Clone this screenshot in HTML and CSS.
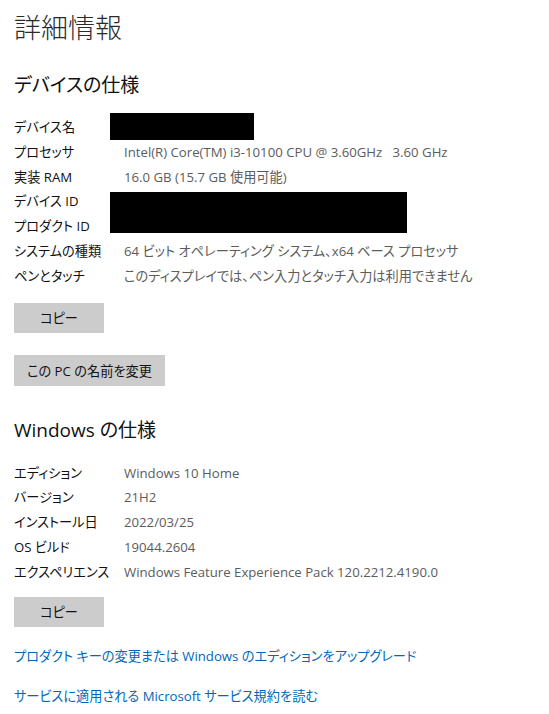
FILE: index.html
```html
<!DOCTYPE html>
<html lang="ja">
<head>
<meta charset="utf-8">
<link rel="stylesheet" href="styles.css">
</head>
<body>
<main class="page">
  <h1 class="title">詳細情報</h1>

  <h2 class="section">デバイスの仕様</h2>
  <div class="specs">
    <div class="label">デバイス名</div>
    <div class="value"><span class="redact redact-name"></span></div>
    <div class="label">プロセッサ</div>
    <div class="value">Intel(R) Core(TM) i3-10100 CPU @ 3.60GHz&nbsp;&nbsp;&nbsp;3.60 GHz</div>
    <div class="label">実装 RAM</div>
    <div class="value">16.0 GB (15.7 GB 使用可能)</div>
    <div class="label">デバイス ID</div>
    <div class="value value-span"><span class="redact redact-id"></span></div>
    <div class="label">プロダクト ID</div>
    <div class="label">システムの種類</div>
    <div class="value">64 ビット オペレーティング システム、x64 ベース プロセッサ</div>
    <div class="label">ペンとタッチ</div>
    <div class="value">このディスプレイでは、ペン入力とタッチ入力は利用できません</div>
  </div>
  <button class="btn btn-copy first-copy">コピー</button>
  <button class="btn btn-rename">この PC の名前を変更</button>

  <h2 class="section section-win">Windows の仕様</h2>
  <div class="specs specs-win">
    <div class="label">エディション</div>
    <div class="value">Windows 10 Home</div>
    <div class="label">バージョン</div>
    <div class="value">21H2</div>
    <div class="label">インストール日</div>
    <div class="value">2022/03/25</div>
    <div class="label">OS ビルド</div>
    <div class="value">19044.2604</div>
    <div class="label">エクスペリエンス</div>
    <div class="value">Windows Feature Experience Pack 120.2212.4190.0</div>
  </div>
  <button class="btn btn-copy second-copy">コピー</button>

  <a class="link link-first" href="#">プロダクト キーの変更または Windows のエディションをアップグレード</a>
  <a class="link link-second" href="#">サービスに適用される Microsoft サービス規約を読む</a>
</main>
</body>
</html>
```

FILE: styles.css
```css
html, body {
  margin: 0;
  padding: 0;
  background: #ffffff;
}

body {
  font-family: "Open Sans", "Noto Sans CJK JP", sans-serif;
  font-feature-settings: "palt";
  color: #000000;
  font-size: 13.2px;
}

.page {
  display: flex;
  flex-direction: column;
  align-items: flex-start;
  padding: 0 0 0 14px;
}

.title {
  margin: 10px 0 0 0;
  font-size: 27px;
  line-height: 34px;
  font-weight: 300;
  font-family: "Noto Sans CJK JP Light", "Noto Sans CJK JP", sans-serif;
  color: #2a2a2a;
}

.section {
  margin: 27px 0 0 0;
  font-size: 19px;
  line-height: 28px;
  font-weight: 400;
  color: #111111;
}

.specs {
  display: grid;
  grid-template-columns: 110px auto;
  grid-auto-rows: 24.8px;
  margin-top: 16px;
  line-height: 24.8px;
}

.label {
  grid-column: 1;
  color: #111111;
  white-space: nowrap;
}

.value {
  grid-column: 2;
  color: #5c5c5c;
  white-space: nowrap;
}

.value-span {
  grid-row: span 2;
}

.redact {
  display: block;
  background: #000000;
  margin-left: -14px;
}

.redact-name {
  width: 144px;
  height: 27px;
  margin-top: -2px;
}

.redact-id {
  width: 297px;
  height: 41px;
  margin-top: 3px;
}

.btn {
  border: none;
  background: #cccccc;
  color: #111111;
  font-family: "Open Sans", "Noto Sans CJK JP", sans-serif;
  font-feature-settings: "palt";
  font-size: 13.2px;
  padding: 0;
}

.btn-copy {
  width: 90px;
  height: 30px;
}

.first-copy {
  margin-top: 14px;
}

.btn-rename {
  margin-top: 22px;
  width: 151px;
  height: 31px;
}

.section-win {
  margin-top: 30px;
}

.specs-win {
  margin-top: 17px;
}

.second-copy {
  margin-top: 12px;
}

.link {
  color: #0067b8;
  text-decoration: none;
  line-height: 20px;
}

.link-first {
  margin-top: 19px;
}

.link-second {
  margin-top: 20px;
}
```
